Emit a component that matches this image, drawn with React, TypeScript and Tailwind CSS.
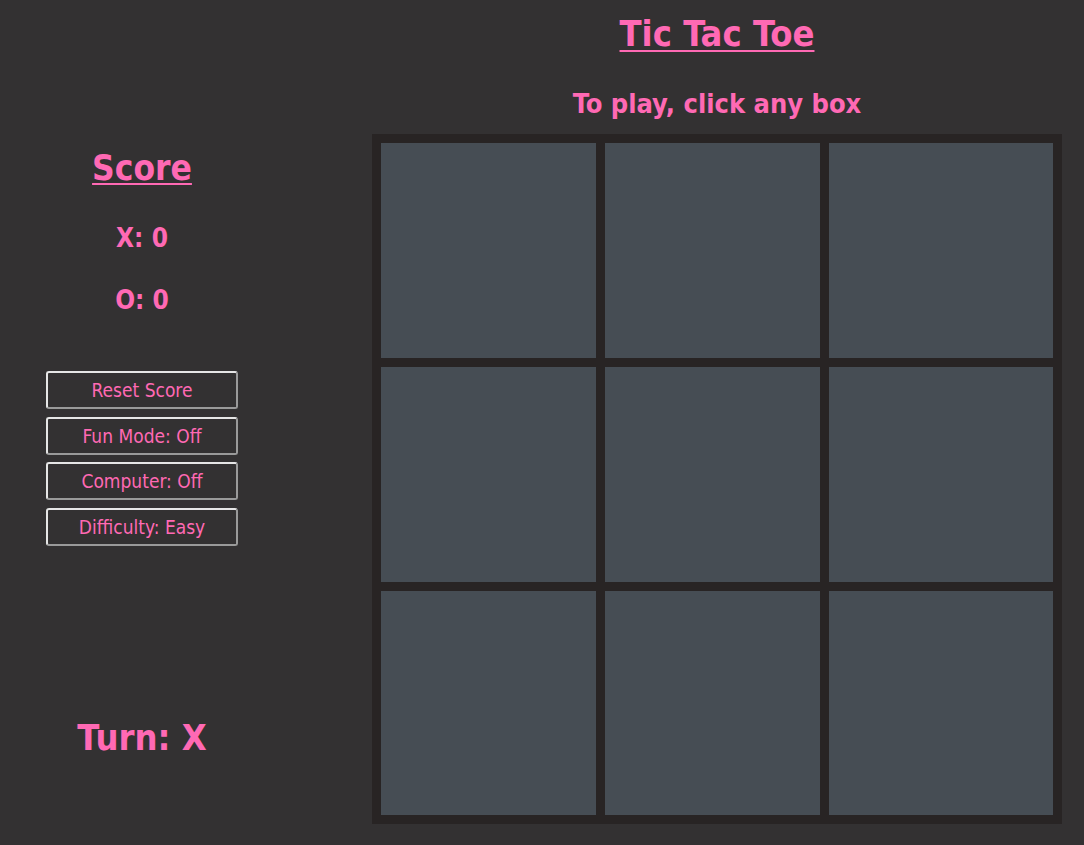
import { useState } from "react";

const FONT = "font-['DejaVu_Sans_Condensed','DejaVu_Sans',sans-serif]";

const App = () => {
  const [board, setBoard] = useState<(string | null)[]>(Array(9).fill(null));
  const [turn, setTurn] = useState<"X" | "O">("X");
  const [score] = useState({ x: 0, o: 0 });
  const [funMode, setFunMode] = useState(false);
  const [computer, setComputer] = useState(false);
  const [difficulty, setDifficulty] = useState("Easy");

  // click a box
  const handleClick = (i: number) => {
    if (board[i]) return;
    const next = [...board];
    next[i] = turn;
    setBoard(next);
    setTurn(turn === "X" ? "O" : "X");
  };

  const buttons = [
    { label: "Reset Score", onClick: () => setBoard(Array(9).fill(null)) },
    { label: `Fun Mode: ${funMode ? "On" : "Off"}`, onClick: () => setFunMode(!funMode) },
    { label: `Computer: ${computer ? "On" : "Off"}`, onClick: () => setComputer(!computer) },
    {
      label: `Difficulty: ${difficulty}`,
      onClick: () => setDifficulty(difficulty === "Easy" ? "Hard" : "Easy"),
    },
  ];

  return (
    <div className={`min-h-[845px] w-full bg-[#333132] text-[#ff69b4] flex ${FONT}`}>
      {/* Left column */}
      <div className="w-[284px] flex flex-col items-center pt-[148px]">
        <h2 className="text-[35px] leading-[40px] font-bold underline underline-offset-[3px] decoration-2">
          Score
        </h2>
        <p className="mt-[34px] text-[26px] leading-[32px] font-bold">X: {score.x}</p>
        <p className="mt-[30px] text-[26px] leading-[32px] font-bold">O: {score.o}</p>

        <div className="mt-[55px] flex flex-col gap-[7.5px]">
          {buttons.map((b) => (
            <button
              key={b.label}
              onClick={b.onClick}
              className="w-[192px] h-[38px] rounded-[3px] border-2 border-t-[#e6e6e6] border-l-[#e6e6e6] border-b-[#9a9a9a] border-r-[#9a9a9a] bg-[#333132] text-[19px] leading-[24px] text-[#ff69b4] cursor-pointer"
            >
              {b.label}
            </button>
          ))}
        </div>

        <p className="mt-[170px] text-[36px] leading-[44px] font-bold">Turn: {turn}</p>
      </div>

      {/* Right column */}
      <div className="ml-[88px] w-[690px] flex flex-col items-center">
        <h1 className="mt-[14px] text-[36px] leading-[40px] font-bold underline underline-offset-[4px] decoration-2">
          Tic Tac Toe
        </h1>
        <p className="mt-[34px] text-[27px] leading-[32px] font-bold">To play, click any box</p>

        <div className="mt-[14px] p-[9px] bg-[#282424] grid grid-cols-[215px_215px_224px] grid-rows-[215px_215px_224px] gap-[9px]">
          {board.map((cell, i) => (
            <div
              key={i}
              onClick={() => handleClick(i)}
              className="bg-[#464d54] flex items-center justify-center text-[120px] font-bold cursor-pointer"
            >
              {cell}
            </div>
          ))}
        </div>
      </div>
    </div>
  );
};

export default App;
